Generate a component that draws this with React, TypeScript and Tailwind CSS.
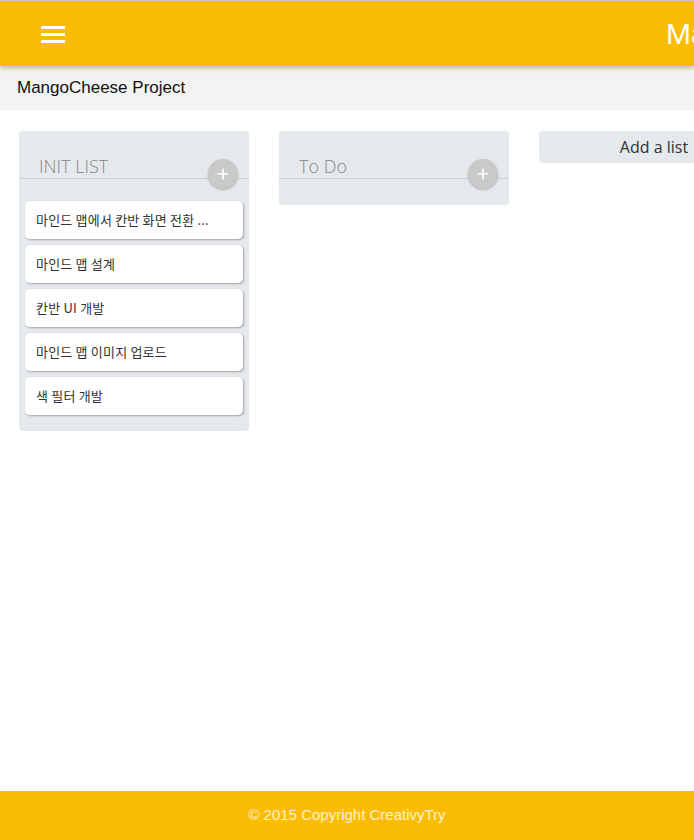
import { Plus } from "lucide-react"

const initCards = [
    "마인드 맵에서 칸반 화면 전환 ...",
    "마인드 맵 설계",
    "칸반 UI 개발",
    "마인드 맵 이미지 업로드",
    "색 필터 개발",
]

function ListColumn({ title, cards }: { title: string; cards: string[] }) {
    return (
        <div className="w-[230px] shrink-0 bg-[#e6e9ec] rounded-[4px] pb-4 self-start">
            {/* heading with the divider line and add button */}
            <div className="relative h-[48px] border-b border-[#cfd2d5]">
                <span className="absolute left-5 top-[23px] text-[18px] leading-[24px] text-[#858585] font-['Open_Sans',sans-serif] font-light">
                    {title}
                </span>
                <button className="absolute right-[11px] top-[28px] w-[30px] h-[30px] rounded-full bg-[#c9c9c9] shadow-[0_1px_2px_rgba(0,0,0,0.25)] flex items-center justify-center text-white">
                    <Plus className="w-[16px] h-[16px]" strokeWidth={2.5} />
                </button>
            </div>
            {cards.length > 0 ? (
                <div className="flex flex-col gap-[6px] px-[6px] pt-[22px]">
                    {cards.map((c) => (
                        <div
                            key={c}
                            className="h-[38px] bg-white rounded-[5px] shadow-[1px_1px_2px_rgba(0,0,0,0.3)] px-[11px] flex items-center text-[13px] tracking-[0.2px] text-[#333] font-['Noto_Sans_CJK_KR',sans-serif]"
                        >
                            {c}
                        </div>
                    ))}
                </div>
            ) : (
                <div className="h-[10px]"></div>
            )}
        </div>
    )
}

export default function App() {
    return (
        <div className="min-h-screen w-full overflow-hidden flex flex-col bg-white font-['Liberation_Sans',Arial,sans-serif]">
            <header className="h-[66px] shrink-0 bg-[#fbbc05] border-t border-[#c8c8c8] shadow-[0_2px_5px_rgba(0,0,0,0.26)] relative z-10 flex items-center pl-[41px] whitespace-nowrap">
                <div className="shrink-0 flex flex-col gap-[4px] w-[24px] mt-[2px]">
                    <div className="h-[3px] bg-white"></div>
                    <div className="h-[3px] bg-white"></div>
                    <div className="h-[3px] bg-white"></div>
                </div>
                <h1 className="shrink-0 ml-[601px] text-[30px] text-white leading-none">MangoCheese</h1>
            </header>

            <div className="h-[44px] shrink-0 bg-[#f3f3f3] flex items-center pl-[17px] text-[17px] text-[#111]">
                MangoCheese Project
            </div>

            <main className="flex-1 flex gap-[30px] pl-[19px] pt-[21px]">
                <ListColumn title="INIT LIST" cards={initCards} />
                <ListColumn title="To Do" cards={[]} />
                <button className="w-[230px] h-[32px] shrink-0 bg-[#e6e9ec] rounded-[4px] text-[16px] text-[#333] font-['Open_Sans',sans-serif]">
                    Add a list
                </button>
            </main>

            <footer className="h-[49px] shrink-0 bg-[#fbbc05] flex items-center justify-center text-[15px] text-white/80">
                © 2015 Copyright CreativyTry
            </footer>
        </div>
    )
}
